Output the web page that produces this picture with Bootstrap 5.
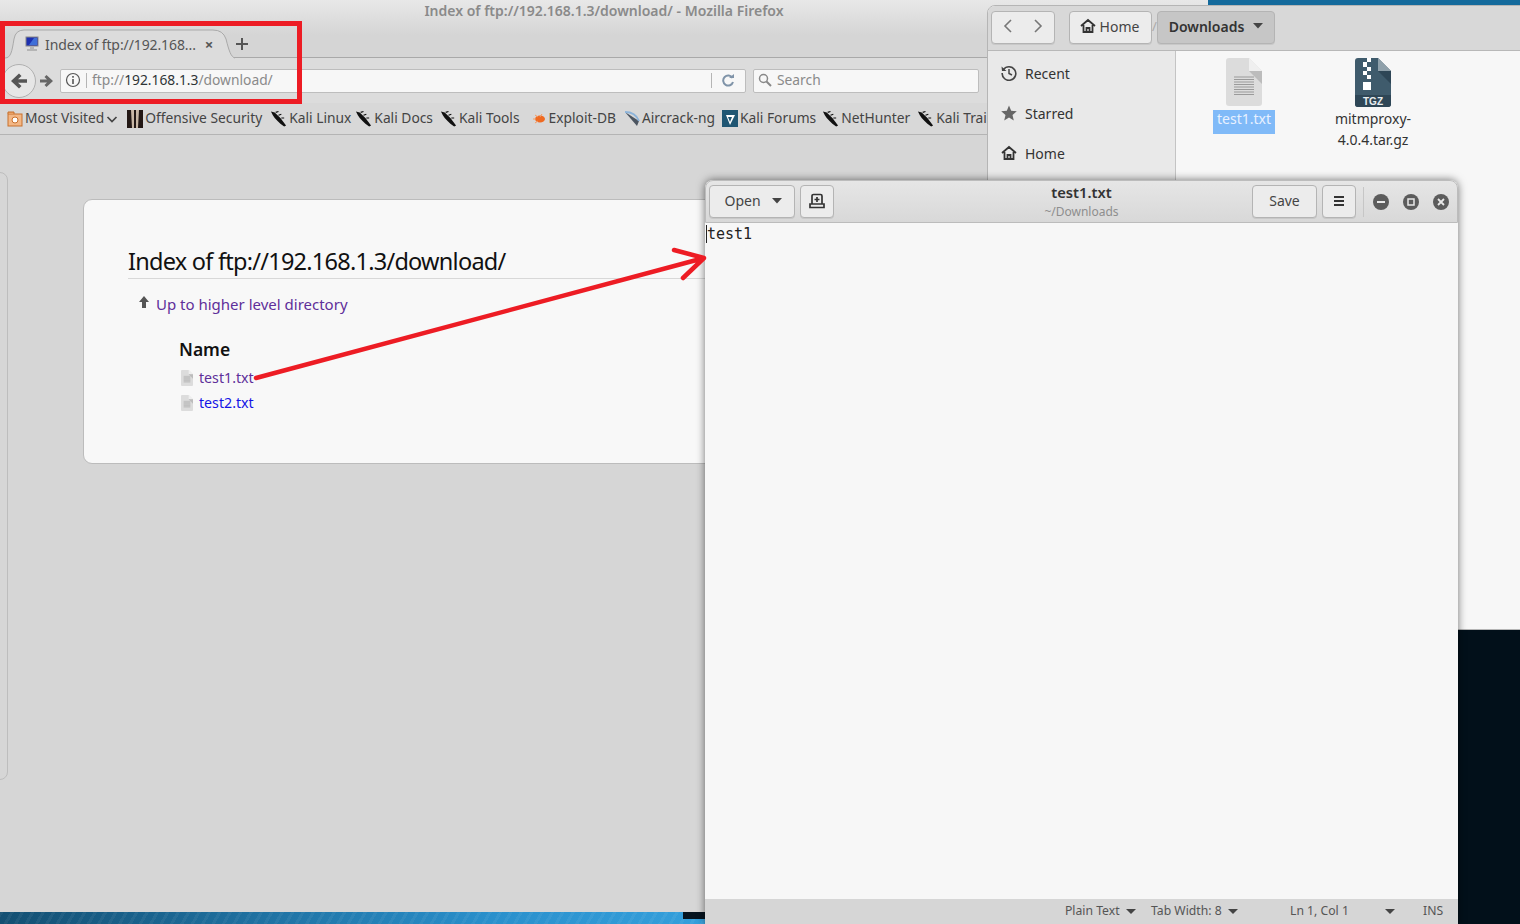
<!DOCTYPE html>
<html lang="en">
<head>
  <meta charset="UTF-8" />
  <title>Index of ftp://192.168.1.3/download/ - Mozilla Firefox</title>
  <link href="https://cdn.jsdelivr.net/npm/bootstrap@5.3.2/dist/css/bootstrap.min.css" rel="stylesheet" />
  <style>
    html, body { margin: 0; height: 100%; overflow: hidden; }
    body { font-family: "Noto Sans", "Open Sans", sans-serif; font-size: 14px; color: #2e3436; background: #02101a; }
    .desk { position: relative; width: 1520px; height: 924px; overflow: hidden; background: #02101a; }
    .wall-bottom { position: absolute; left: 0; bottom: 0; width: 705px; height: 12px; background: repeating-linear-gradient(120deg, rgba(255,255,255,.05) 0 3px, transparent 3px 9px), linear-gradient(90deg, #134f72, #2a90cc 70%, #35a0dc); }
    .wall-chunk { position: absolute; left: 683px; top: 912px; width: 22px; height: 7px; background: #06141f; }
    .wall-top { position: absolute; left: 1208px; top: 0; width: 312px; height: 6px; background: #146a9c; }

    /* firefox */
    .ff { position: absolute; left: 0; top: 0; width: 1208px; height: 912px; background: #d6d6d6; display: flex; flex-direction: column; }
    .ff-title { height: 58px; flex: none; position: relative; background: linear-gradient(#e8e8e8, #d5d5d5 60%); }
    .ff-title-line { position: absolute; left: 232px; right: 0; bottom: 0; height: 1px; background: #a9a9a9; }
    .ff-title-text { text-align: center; font-size: 14px; font-weight: 600; color: #8a8a8a; line-height: 21px; }
    .ff-tab { position: absolute; left: 4px; top: 29px; width: 232px; height: 30px; display: flex; align-items: center; padding-left: 20px; gap: 5px; color: #555; font-size: 14px; letter-spacing: -.1px; }
    .ff-tab-shape { position: absolute; left: 0; top: 0; }
    .ff-tab > span, .ff-tab > .tab-fav { position: relative; }
    .ff-tab-close { margin-left: 4px; font-weight: 700; font-size: 15px; color: #555; }
    .ff-newtab { position: absolute; left: 233px; top: 35px; }
    .ff-nav { height: 45px; flex: none; background: #dcdcdc; padding-left: 2px; }
    .ff-back { width: 34px; height: 34px; flex: none; border-radius: 50%; border: 1px solid #b0b0b0; background: #e6e6e6; display: flex; align-items: center; justify-content: center; }
    .ff-fwd { margin-left: 4px; flex: none; }
    .ff-input { height: 24px; background: #f7f7f7; border: 1px solid #bdbdbd; border-radius: 2px; font-size: 13.8px; color: #8a8a8a; margin-left: 7px; flex: none; padding-bottom: 1px; }
    .ff-url { width: 686px; }
    .ff-search { width: 226px; padding-left: 4px; gap: 5px; }
    .ff-sep { width: 1px; height: 15px; background: #b5b5b5; }
    .ff-sep-a { margin: 0 5px 0 5px; }
    .ff-host { color: #2e3436; }
    .ff-reload { margin: 0 10px 0 9px; }
    .ff-marks { height: 32px; width: 987px; flex: none; overflow: hidden; background: #d8d8d8; padding-left: 7px; gap: 6px; white-space: nowrap; font-size: 13.8px; color: #444; padding-bottom: 1px; }
    .ff-marks-rule { height: 1px; flex: none; background: #b4b4b4; margin-top: -1px; position: relative; }
    .ff-mark { display: flex; align-items: center; gap: 2px; }
    .ff-mark:nth-child(2) { margin-left: 3px; }
    .ff-mark:nth-child(3) { margin-left: 2px; }
    .ff-mark:nth-child(4) { margin-left: -2px; }
    .ff-mark:nth-child(5) { margin-left: 1px; }
    .ff-mark:nth-child(6) { margin-left: 6px; }
    .ff-mark:nth-child(7) { margin-left: 2px; }
    .ff-mark:nth-child(8), .ff-mark:nth-child(10) { margin-left: 1px; }
    .ff-page { flex: 1; position: relative; }
    .ff-sidecard { position: absolute; left: -10px; top: 37px; width: 18px; height: 608px; border: 1px solid #bdbdbd; border-radius: 8px; }
    .ftp-card { position: absolute; left: 83px; top: 64px; width: 1000px; height: 265px; background: #f8f8f8; border: 1px solid #bcbcbc; border-radius: 9px; padding: 44px 44px 0; }
    .ftp-head { font-size: 23.5px; line-height: 34px; color: #111; border-bottom: 1px solid #d8d8d8; height: 35px; letter-spacing: -.75px; }
    .ftp-up { margin: 13px 0 0 11px; gap: 7px; font-size: 15px; line-height: 24px; }
    .ftp-up svg { margin-top: -4px; }
    .ftp-name { font-size: 17.5px; font-weight: 600; color: #111; margin: 20px 0 0 51px; line-height: 26px; }
    .ftp-row { margin: 3px 0 -3px 53px; height: 25px; gap: 6px; font-size: 14.2px; }
    .ftp-row a { text-decoration: none; }
    .seen { color: #5f2f9a; }
    .fresh { color: #1414e6; }

    /* files */
    .nautilus { position: absolute; left: 987px; top: 5px; width: 540px; height: 625px; background: #f7f7f7; border: 1px solid #b5b5b5; border-radius: 8px 0 0 0; display: flex; flex-direction: column; overflow: hidden; }
    .naut-head { height: 45px; flex: none; background: #d8d8d8; border-bottom: 1px solid #b8b8b8; padding: 4px 3px 6px; }
    .gbtn { display: inline-flex; align-items: center; justify-content: center; height: 33px; padding: 0 0 2px; background: #ececec; border: 1px solid #b4b4b4; border-radius: 4px; color: #444; font-size: 14px; box-shadow: 0 1px 0 #c8c8c8; }
    .gbtn:hover { background: #ececec; color: #444; border-color: #b4b4b4; }
    .gbtn-nav { width: 64px; gap: 20px; margin-right: 14px; }
    .gbtn-home { width: 83px; gap: 4px; padding-right: 2px; }
    .gbtn-cur { width: 118px; gap: 9px; background: #c6c6c6; font-weight: 600; color: #333; }
    .path-slash { color: #aaa; width: 5px; font-size: 13px; text-align: center; }
    .naut-body { flex: 1; display: flex; min-height: 0; }
    .naut-side { width: 188px; flex: none; background: #e9e9e9; border-right: 1px solid #c4c4c4; padding-top: 2px; }
    .naut-side .list-group-item { background: transparent; border: 0; height: 40px; padding: 0 0 0 13px; display: flex; align-items: center; gap: 8px; font-size: 14px; color: #333; }
    .naut-main { flex: 1; display: flex; gap: 50px; padding: 7px 0 0 37px; align-items: flex-start; }
    .ficon { width: 62px; display: flex; flex-direction: column; align-items: center; }
    .ficon-tgz { width: 100px; margin-left: -2px; }
    .flabel { font-size: 14px; line-height: 21px; text-align: center; color: #333; }
    .flabel-sel { background: #80baf8; color: #e8f1ff; line-height: 18px; padding-bottom: 6px; width: 62px; margin-top: 4px; }
    .flabel-plain { margin-top: 1px; }

    /* gedit */
    .gedit { position: absolute; left: 705px; top: 180px; width: 753px; height: 744px; background: #f7f7f7; border-radius: 8px 8px 0 0; box-shadow: 0 0 9px rgba(0,0,0,.55); display: flex; flex-direction: column; }
    .ged-head { height: 43px; flex: none; background: linear-gradient(#e6e6e6, #d8d8d8); border: 1px solid #bcbcbc; border-radius: 8px 8px 0 0; padding: 0 8px 0 3px; position: relative; gap: 5px; }
    .ged-title { position: absolute; left: 0; right: 0; top: 1px; text-align: center; pointer-events: none; }
    .ged-name { font-size: 14.7px; font-weight: 600; line-height: 20px; color: #333; }
    .ged-path { font-size: 12px; line-height: 20px; color: #8e8e8e; }
    .gbtn-open { width: 86px; gap: 11px; padding-left: 2px; }
    .gbtn-sq { width: 34px; }
    .gbtn-save { width: 65px; }
    .ged-sep { width: 1px; height: 30px; background: #c6c6c6; margin: 0 4px 0 2px; }
    .wbtn { display: block; }
    .ged-wins { gap: 14px; }
    .ged-text { flex: 1; padding: 1px 0 0 1px; font-family: "DejaVu Sans Mono", monospace; font-size: 15px; line-height: 20px; color: #222; }
    .ged-text span { border-left: 1px solid #222; }
    .ged-status { height: 25px; flex: none; background: #d6d6d6; font-size: 12.2px; color: #555; position: relative; padding-left: 360px; }
    .stat-plain { width: 86px; gap: 6px; }
    .stat-tab { width: 139px; gap: 6px; }
    .stat-ln { width: 95px; }
    .stat-arrow { width: 38px; }
    .overlay { position: absolute; left: 0; top: 0; pointer-events: none; }
    .redbox { position: absolute; left: 0; top: 21px; width: 302px; height: 83px; border: 5px solid #ed1c24; }
  </style>
</head>
<body>
  <svg width="0" height="0" class="position-absolute">
    <symbol id="kali" viewBox="0 0 18 18">
      <path d="M1 1 L5 2 L8 5 L11 8 L14 12 L17 16 L15 17 L11 14 L8 11 L5 8 L3 5 Z" fill="#111"/>
      <path d="M6 2 L9 1 M9 5 L12 4 M12 8 L15 8" stroke="#111" stroke-width="1.2"/>
    </symbol>
    <symbol id="doc" viewBox="0 0 36 48">
      <path d="M3 0H23L36 13V45a3 3 0 0 1-3 3H3a3 3 0 0 1-3-3V3a3 3 0 0 1 3-3Z" fill="#dcdcdc"/>
      <path d="M23 0L36 13H23Z" fill="#efefef"/>
      <path d="M36 13V26L23 13Z" fill="#bcbcbc"/>
      <path d="M8 19H28M8 21.5H28M8 24H28M8 26.5H28M8 29H28M8 31.5H28M8 34H28M8 36.5H28" stroke="#9a9a9a" stroke-width="1"/>
    </symbol>
    <symbol id="homeic" viewBox="0 0 16 16">
      <path d="M1 8L8 2L15 8M3.500 7V14H12.500V7M6.500 14V10H9.500V14" fill="none" stroke="#333" stroke-width="1.800"/>
    </symbol>
  </svg>

  <div class="desk">
    <div class="wall-top"></div>
    <div class="wall-bottom"></div>
    <div class="wall-chunk"></div>

    <!-- firefox window -->
    <div class="ff">
      <div class="ff-title">
        <div class="ff-title-line"></div>
        <div class="ff-title-text">Index of ftp://192.168.1.3/download/ - Mozilla Firefox</div>
        <div class="ff-tab">
          <svg class="ff-tab-shape" width="232" height="30" viewBox="0 0 232 30">
            <path d="M1 29C7 29 8 22 10 10Q11.500 1 20 1H209Q219 1 222 10C225 22 227 28 231 29V30H1Z" fill="#dcdcdc"/>
            <path d="M1 29C7 29 8 22 10 10Q11.500 1 20 1H209Q219 1 222 10C225 22 227 28 231 29" fill="none" stroke="#a9a9a9"/>
          </svg>
          <svg class="tab-fav flex-none" width="16" height="16" viewBox="0 0 16 16">
            <rect x="2" y="1" width="12" height="9" fill="#1d2fb0" stroke="#888"/>
            <path d="M5 9L10 2H13V9Z" fill="#3f6fd8"/>
            <path d="M6 11H10V13H13V15H3V13H6Z" fill="#b5b5b5"/>
          </svg>
          <span>Index of ftp://192.168...</span>
          <span class="ff-tab-close">×</span>
        </div>
        <svg class="ff-newtab" width="18" height="18" viewBox="0 0 18 18"><path d="M9 3V15M3 9H15" stroke="#555" stroke-width="2"/></svg>
      </div>

      <div class="ff-nav d-flex align-items-center">
        <div class="ff-back">
          <svg width="18" height="18" viewBox="0 0 18 18"><path d="M1 9L9 1.500L11.500 4L8 7.300H17V10.700H8L11.500 14L9 16.500Z" fill="#555"/></svg>
        </div>
        <svg class="ff-fwd" width="13" height="14" viewBox="0 0 13 14"><path d="M13 7L6.500 1L4.500 3L7 5.500H0V8.500H7L4.500 11L6.500 13Z" fill="#666"/></svg>
        <div class="ff-input ff-url d-flex align-items-center">
          <svg class="ms-1" width="16" height="16" viewBox="0 0 16 16"><circle cx="8" cy="8" r="6.500" fill="none" stroke="#555" stroke-width="1.200"/><path d="M8 7V12M8 4V5.800" stroke="#555" stroke-width="1.600"/></svg>
          <span class="ff-sep ff-sep-a"></span>
          <span>ftp://<span class="ff-host">192.168.1.3</span>/download/</span>
          <span class="ff-sep ms-auto"></span>
          <svg class="ff-reload" width="14" height="14" viewBox="0 0 14 14"><path d="M11.500 5A5 5 0 1 0 12 9" fill="none" stroke="#7f93a8" stroke-width="2"/><path d="M8 5H13V1Z" fill="#7f93a8"/></svg>
        </div>
        <div class="ff-input ff-search d-flex align-items-center">
          <svg width="14" height="14" viewBox="0 0 14 14"><circle cx="5.500" cy="5.500" r="4" fill="none" stroke="#888" stroke-width="1.500"/><path d="M8.500 8.500L13 13" stroke="#888" stroke-width="2"/></svg>
          <span>Search</span>
        </div>
      </div>

      <div class="ff-marks d-flex align-items-center">
        <div class="ff-mark">
          <svg width="16" height="16" viewBox="0 0 16 16"><rect x="1" y="3" width="14" height="12" fill="#f3b785" stroke="#c8702c"/><path d="M1 3V1H7V3" fill="#e9a063" stroke="#c8702c"/><circle cx="8" cy="9" r="3" fill="#fff" stroke="#c8702c"/></svg>
          <span>Most Visited</span>
          <svg width="12" height="12" viewBox="0 0 12 12"><path d="M1.500 4L6 8.500L10.500 4" fill="none" stroke="#444" stroke-width="1.700"/></svg>
        </div>
        <div class="ff-mark">
          <svg width="16" height="18" viewBox="0 0 16 18"><rect width="16" height="18" fill="#231815"/><path d="M4 0H7V18H5ZM9 0H12L11 18H9Z" fill="#c9b7a5"/></svg>
          <span>Offensive Security</span>
        </div>
        <div class="ff-mark"><svg width="17" height="18"><use href="#kali"/></svg><span>Kali Linux</span></div>
        <div class="ff-mark"><svg width="17" height="18"><use href="#kali"/></svg><span>Kali Docs</span></div>
        <div class="ff-mark"><svg width="17" height="18"><use href="#kali"/></svg><span>Kali Tools</span></div>
        <div class="ff-mark">
          <svg width="15" height="14" viewBox="0 0 15 14"><ellipse cx="8" cy="7" rx="5" ry="3.500" fill="#ef6a22"/><path d="M3 3L6 5M3 11L6 9M1 7H4M10 2L8 5" stroke="#f49a63"/></svg>
          <span>Exploit-DB</span>
        </div>
        <div class="ff-mark">
          <svg width="16" height="18" viewBox="0 0 16 18"><path d="M1 2L13 16L15 11Z" fill="#4c5560"/><path d="M1 2C8 2 13 6 15 11" fill="none" stroke="#8db4da" stroke-width="2"/></svg>
          <span>Aircrack-ng</span>
        </div>
        <div class="ff-mark">
          <svg width="16" height="17" viewBox="0 0 16 17"><rect width="16" height="17" fill="#1f5673"/><path d="M4 5H13L8 15Z" fill="#fff"/><path d="M6 7H10L8 12Z" fill="#1f5673"/></svg>
          <span>Kali Forums</span>
        </div>
        <div class="ff-mark"><svg width="17" height="18"><use href="#kali"/></svg><span>NetHunter</span></div>
        <div class="ff-mark"><svg width="17" height="18"><use href="#kali"/></svg><span>Kali Trai</span></div>
      </div>
      <div class="ff-marks-rule"></div>

      <div class="ff-page">
        <div class="ff-sidecard"></div>
        <div class="ftp-card">
          <div class="ftp-head">Index of ftp://192.168.1.3/download/</div>
          <div class="ftp-up d-flex align-items-center">
            <svg width="10" height="13" viewBox="0 0 10 13"><path d="M5 0L10 6H7V12H3V6H0Z" fill="#555"/></svg>
            <a class="seen text-decoration-none" href="#">Up to higher level directory</a>
          </div>
          <div class="ftp-name">Name</div>
          <div class="ftp-row d-flex align-items-center">
            <svg width="12" height="16"><use href="#doc"/></svg>
            <a class="seen" href="#">test1.txt</a>
          </div>
          <div class="ftp-row d-flex align-items-center">
            <svg width="12" height="16"><use href="#doc"/></svg>
            <a class="fresh" href="#">test2.txt</a>
          </div>
        </div>
      </div>
    </div>

    <!-- files window -->
    <div class="nautilus">
      <div class="naut-head d-flex align-items-center">
        <button class="btn gbtn gbtn-nav" type="button">
          <svg width="10" height="14" viewBox="0 0 10 14"><path d="M8 1L2 7L8 13" fill="none" stroke="#777" stroke-width="1.600"/></svg>
          <svg width="10" height="14" viewBox="0 0 10 14"><path d="M2 1L8 7L2 13" fill="none" stroke="#777" stroke-width="1.600"/></svg>
        </button>
        <button class="btn gbtn gbtn-home" type="button"><svg width="16" height="16"><use href="#homeic"/></svg>Home</button>
        <span class="path-slash">/</span>
        <button class="btn gbtn gbtn-cur" type="button">Downloads
          <svg width="10" height="6" viewBox="0 0 10 6"><path d="M0 0H10L5 5.500Z" fill="#444"/></svg>
        </button>
      </div>
      <div class="naut-body">
        <div class="naut-side list-group list-group-flush rounded-0">
          <div class="list-group-item">
            <svg width="16" height="16" viewBox="0 0 16 16"><path d="M2.500 4.500A6.800 6.800 0 1 1 1.200 8" fill="none" stroke="#444" stroke-width="1.600"/><path d="M0.500 1.500L1 6H5.500Z" fill="#444"/><path d="M8 4V8.500L11 10" fill="none" stroke="#444" stroke-width="1.500"/></svg>
            Recent
          </div>
          <div class="list-group-item">
            <svg width="16" height="16" viewBox="0 0 16 16"><path d="M8 .5L10.200 5.700L15.800 6.200L11.500 9.900L12.800 15.500L8 12.500L3.200 15.500L4.500 9.900L.2 6.200L5.800 5.700Z" fill="#666"/></svg>
            Starred
          </div>
          <div class="list-group-item"><svg width="16" height="16"><use href="#homeic"/></svg>Home</div>
        </div>
        <div class="naut-main">
          <div class="ficon">
            <svg width="36" height="48"><use href="#doc"/></svg>
            <div class="flabel flabel-sel">test1.txt</div>
          </div>
          <div class="ficon ficon-tgz">
            <svg width="36" height="49" viewBox="0 0 36 49">
              <path d="M3 0H23L36 13V46a3 3 0 0 1-3 3H3a3 3 0 0 1-3-3V3a3 3 0 0 1 3-3Z" fill="#3f5b6c"/>
              <path d="M23 0L36 13H23Z" fill="#8fa0aa"/>
              <path d="M36 13V26L23 13Z" fill="#2e4656"/>
              <path d="M0 37H36V46a3 3 0 0 1-3 3H3a3 3 0 0 1-3-3Z" fill="#2e4656"/>
              <path d="M12 0H16V4H12ZM8 4H12V9H8ZM12 9H16V13H12ZM8 13H12V17H8ZM12 17H16V21H12ZM8 24H16V32H8Z" fill="#fff"/>
              <text x="18" y="47" text-anchor="middle" font-family="Liberation Sans, sans-serif" font-weight="700" font-size="10" fill="#e8edf0">TGZ</text>
            </svg>
            <div class="flabel flabel-plain">mitmproxy-<br>4.0.4.tar.gz</div>
          </div>
        </div>
      </div>
    </div>

    <!-- gedit window -->
    <div class="gedit">
      <div class="ged-head d-flex align-items-center">
        <div class="ged-title">
          <div class="ged-name">test1.txt</div>
          <div class="ged-path">~/Downloads</div>
        </div>
        <button class="btn gbtn gbtn-open" type="button">Open
          <svg width="10" height="6" viewBox="0 0 10 6"><path d="M0 0H10L5 5.500Z" fill="#444"/></svg>
        </button>
        <button class="btn gbtn gbtn-sq" type="button">
          <svg width="16" height="16" viewBox="0 0 16 16"><path d="M3 11V3a1.500 1.500 0 0 1 1.500-1.500H11.500A1.500 1.500 0 0 1 13 3V11M1 11H15V14.500H1ZM8 4V9M5.500 6.500H10.500" fill="none" stroke="#333" stroke-width="1.700"/></svg>
        </button>
        <button class="btn gbtn gbtn-save ms-auto" type="button">Save</button>
        <button class="btn gbtn gbtn-sq" type="button">
          <svg width="12" height="12" viewBox="0 0 12 12"><path d="M1 2H11M1 6H11M1 10H11" stroke="#333" stroke-width="1.800"/></svg>
        </button>
        <span class="ged-sep"></span>
        <div class="d-flex ged-wins">
          <svg class="wbtn" width="16" height="16" viewBox="0 0 16 16"><circle cx="8" cy="8" r="8" fill="#5c5c5c"/><path d="M4 8H12" stroke="#e8e8e8" stroke-width="2"/></svg>
          <svg class="wbtn" width="16" height="16" viewBox="0 0 16 16"><circle cx="8" cy="8" r="8" fill="#5c5c5c"/><rect x="5" y="5" width="6" height="6" fill="none" stroke="#e8e8e8" stroke-width="1.500"/></svg>
          <svg class="wbtn" width="16" height="16" viewBox="0 0 16 16"><circle cx="8" cy="8" r="8" fill="#5c5c5c"/><path d="M5 5L11 11M11 5L5 11" stroke="#e8e8e8" stroke-width="1.800"/></svg>
        </div>
      </div>
      <div class="ged-text"><span>test1</span></div>
      <div class="ged-status d-flex align-items-center">
        <div class="stat-plain d-flex align-items-center">Plain Text <svg width="10" height="5" viewBox="0 0 10 5"><path d="M0 0H10L5 5Z" fill="#444"/></svg></div>
        <div class="stat-tab d-flex align-items-center">Tab Width: 8 <svg width="10" height="5" viewBox="0 0 10 5"><path d="M0 0H10L5 5Z" fill="#444"/></svg></div>
        <div class="stat-ln">Ln 1, Col 1</div>
        <div class="stat-arrow d-flex align-items-center"><svg width="10" height="5" viewBox="0 0 10 5"><path d="M0 0H10L5 5Z" fill="#444"/></svg></div>
        <div>INS</div>
      </div>
    </div>

    <!-- annotations drawn over the screenshot -->
    <div class="redbox"></div>
    <svg class="overlay" width="1520" height="924" viewBox="0 0 1520 924">
      <path d="M256 378L704 258M674 250L704 258L683 278" fill="none" stroke="#ed1c24" stroke-width="4.500" stroke-linecap="round" stroke-linejoin="round"/>
    </svg>
  </div>

  <script src="https://cdn.jsdelivr.net/npm/bootstrap@5.3.2/dist/js/bootstrap.bundle.min.js"></script>
</body>
</html>
